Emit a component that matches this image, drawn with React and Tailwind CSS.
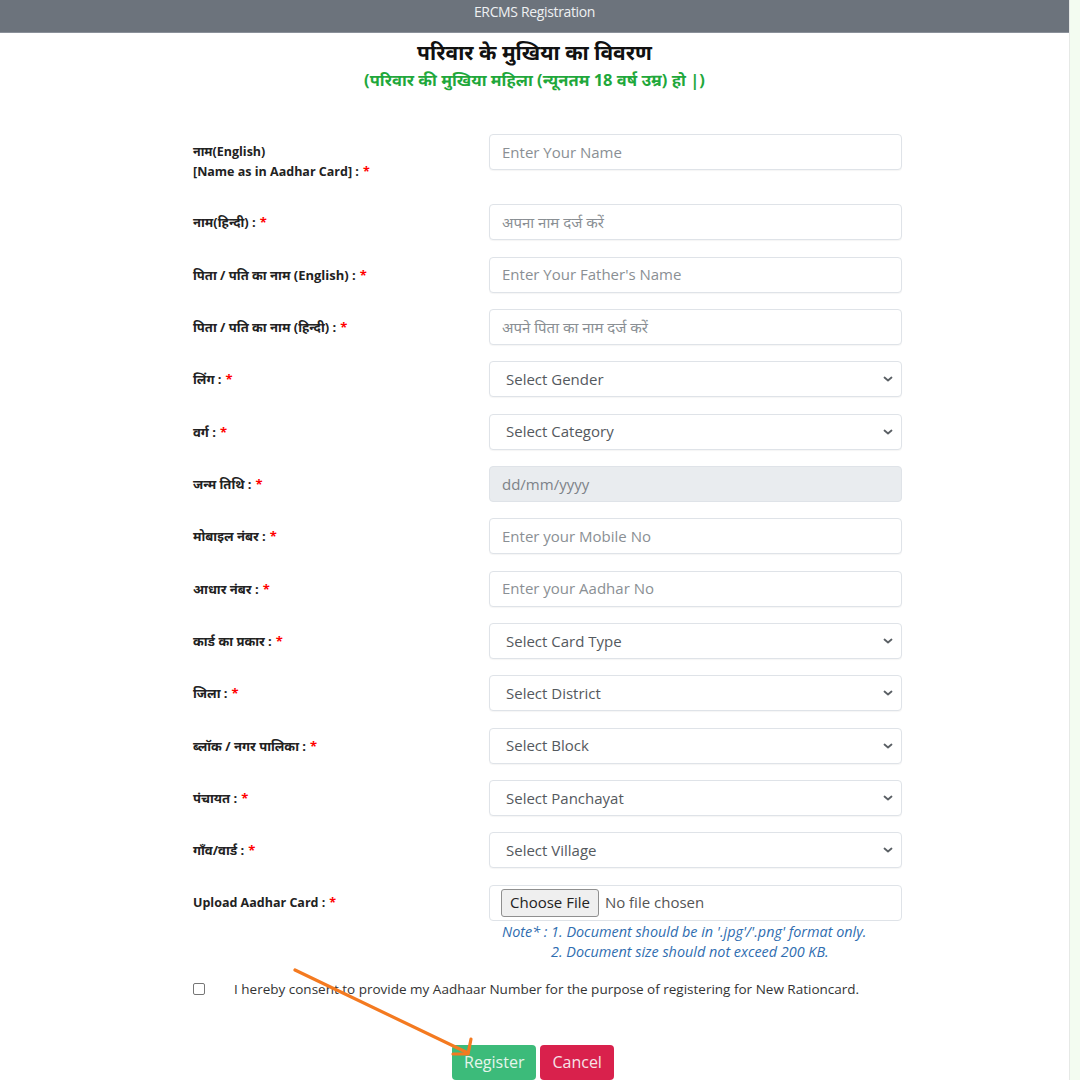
import React from 'react';

const fontStack = { fontFamily: '"Open Sans", "Noto Sans Devanagari", "Noto Sans", "Lohit Devanagari", sans-serif' };

const rows = [
  { label: 'नाम(हिन्दी) :', type: 'text', ph: 'अपना नाम दर्ज करें' },
  { label: 'पिता / पति का नाम (English) :', type: 'text', ph: "Enter Your Father's Name" },
  { label: 'पिता / पति का नाम (हिन्दी) :', type: 'text', ph: 'अपने पिता का नाम दर्ज करें' },
  { label: 'लिंग :', type: 'select', ph: 'Select Gender' },
  { label: 'वर्ग :', type: 'select', ph: 'Select Category' },
  { label: 'जन्म तिथि :', type: 'date', ph: 'dd/mm/yyyy' },
  { label: 'मोबाइल नंबर :', type: 'text', ph: 'Enter your Mobile No' },
  { label: 'आधार नंबर :', type: 'text', ph: 'Enter your Aadhar No' },
  { label: 'कार्ड का प्रकार :', type: 'select', ph: 'Select Card Type' },
  { label: 'जिला :', type: 'select', ph: 'Select District' },
  { label: 'ब्लॉक / नगर पालिका :', type: 'select', ph: 'Select Block' },
  { label: 'पंचायत :', type: 'select', ph: 'Select Panchayat' },
  { label: 'गाँव/वार्ड :', type: 'select', ph: 'Select Village' },
];

function Star() {
  return <span className="text-[#ff0000] ml-1">*</span>;
}

function Field({ type, ph }) {
  if (type === 'select') {
    return (
      <div className="w-[413px] h-[36px] border border-[#dfe3e8] rounded-[4px] bg-white flex items-center justify-between pl-4 pr-2 shadow-[0_1px_1px_rgba(0,0,0,0.04)]">
        <span className="text-[15px] text-[#54595e]">{ph}</span>
        <svg width="10" height="8" viewBox="0 0 10 8" className="text-[#5a5f64]">
          <path d="M1.5 2.5 L5 5.5 L8.5 2.5" fill="none" stroke="currentColor" strokeWidth="1.8" strokeLinecap="round" strokeLinejoin="round" />
        </svg>
      </div>
    );
  }
  if (type === 'date') {
    return (
      <div className="w-[413px] h-[36px] border border-[#dfe3e8] rounded-[4px] bg-[#e9ecef] flex items-center px-3">
        <span className="text-[15px] text-[#7d8288]">{ph}</span>
      </div>
    );
  }
  return (
    <div className="w-[413px] h-[36px] border border-[#dfe3e8] rounded-[4px] bg-white flex items-center px-3 shadow-[0_1px_1px_rgba(0,0,0,0.04)]">
      <span className="text-[15px] text-[#8a8f94]">{ph}</span>
    </div>
  );
}

export default function App() {
  return (
    <div className="w-[1080px] h-[1080px] bg-white relative overflow-hidden flex" style={fontStack}>
      <div className="w-[1069px] h-full flex flex-col">
        {/* top bar */}
        <div className="h-[33px] bg-[#6c737c] flex items-center justify-center border-b border-[#8a9099]">
          <span className="text-[14px] text-[#eef0f2] -mt-[9px] tracking-tight">ERCMS Registration</span>
        </div>

        {/* headings */}
        <div className="flex flex-col items-center mt-[4px]">
          <h1 className="text-[21px] font-bold text-[#111] leading-[30px]">परिवार के मुखिया का विवरण</h1>
          <p className="text-[16.5px] font-bold text-[#1fa83b] leading-[24px] mt-[1px]">(परिवार की मुखिया महिला (न्यूनतम 18 वर्ष उम्र) हो |)</p>
        </div>

        {/* form */}
        <div className="flex flex-col gap-[16.33px] pl-[193px] mt-[42px]">
          <div className="flex h-[54px]">
            <div className="w-[296px] pt-[8px] text-[12.5px] font-bold text-[#222] leading-[20px]">
              <div>नाम(English)</div>
              <div>[Name as in Aadhar Card] :<Star /></div>
            </div>
            <Field type="text" ph="Enter Your Name" />
          </div>

          {rows.map((r) => (
            <div key={r.label} className="flex h-[36px]">
              <div className="w-[296px] pt-[8px] text-[13px] font-bold text-[#222] leading-[20px]">
                {r.label}<Star />
              </div>
              <Field type={r.type} ph={r.ph} />
            </div>
          ))}

          <div className="flex">
            <div className="w-[296px] pt-[8px] text-[12.5px] font-bold text-[#222] leading-[20px]">
              Upload Aadhar Card :<Star />
            </div>
            <div className="flex flex-col">
              <div className="w-[413px] h-[36px] border border-[#dfe3e8] rounded-[4px] bg-white flex items-center px-[11px]">
                <span className="h-[28px] px-[8px] flex items-center bg-[#efefef] border border-[#8f8f8f] rounded-[3px] text-[15px] text-[#222]">Choose File</span>
                <span className="ml-[6px] text-[15px] text-[#555]">No file chosen</span>
              </div>
              <div className="italic text-[14.4px] text-[#2f6db0] leading-[20px] mt-[1px]">
                <div className="pl-[13px]">Note* : 1. Document should be in '.jpg'/'.png' format only.</div>
                <div className="pl-[62px]">2. Document size should not exceed 200 KB.</div>
              </div>
            </div>
          </div>
        </div>

        {/* consent */}
        <div className="flex items-center pl-[193px] mt-[17px]">
          <span className="w-[12px] h-[12px] border border-[#767676] rounded-[2px] bg-white" />
          <span className="ml-[29px] text-[13.5px] text-[#333]">I hereby consent to provide my Aadhaar Number for the purpose of registering for New Rationcard.</span>
        </div>

        {/* buttons */}
        <div className="flex justify-start gap-[4px] pl-[452px] mt-[46px]">
          <button className="h-[35px] px-[12px] bg-[#3cbb7a] text-[#e6f5ec] text-[16px] rounded-[4px]">Register</button>
          <button className="h-[35px] px-[12px] bg-[#d9214c] text-[#f6e3e8] text-[16px] rounded-[4px]">Cancel</button>
        </div>
      </div>

      {/* right strip */}
      <div className="w-[11px] h-full bg-[#f3fcf1] border-l border-[#e6e9e6]" />

      {/* annotation arrow */}
      <svg className="absolute left-0 top-0 pointer-events-none" width="1080" height="1080">
        <line x1="295" y1="970" x2="468" y2="1053" stroke="#f47a20" strokeWidth="3.2" strokeLinecap="round" />
        <path d="M471 1039 L468 1054 L453 1054" fill="none" stroke="#f47a20" strokeWidth="3.2" strokeLinecap="round" strokeLinejoin="round" />
      </svg>
    </div>
  );
}
